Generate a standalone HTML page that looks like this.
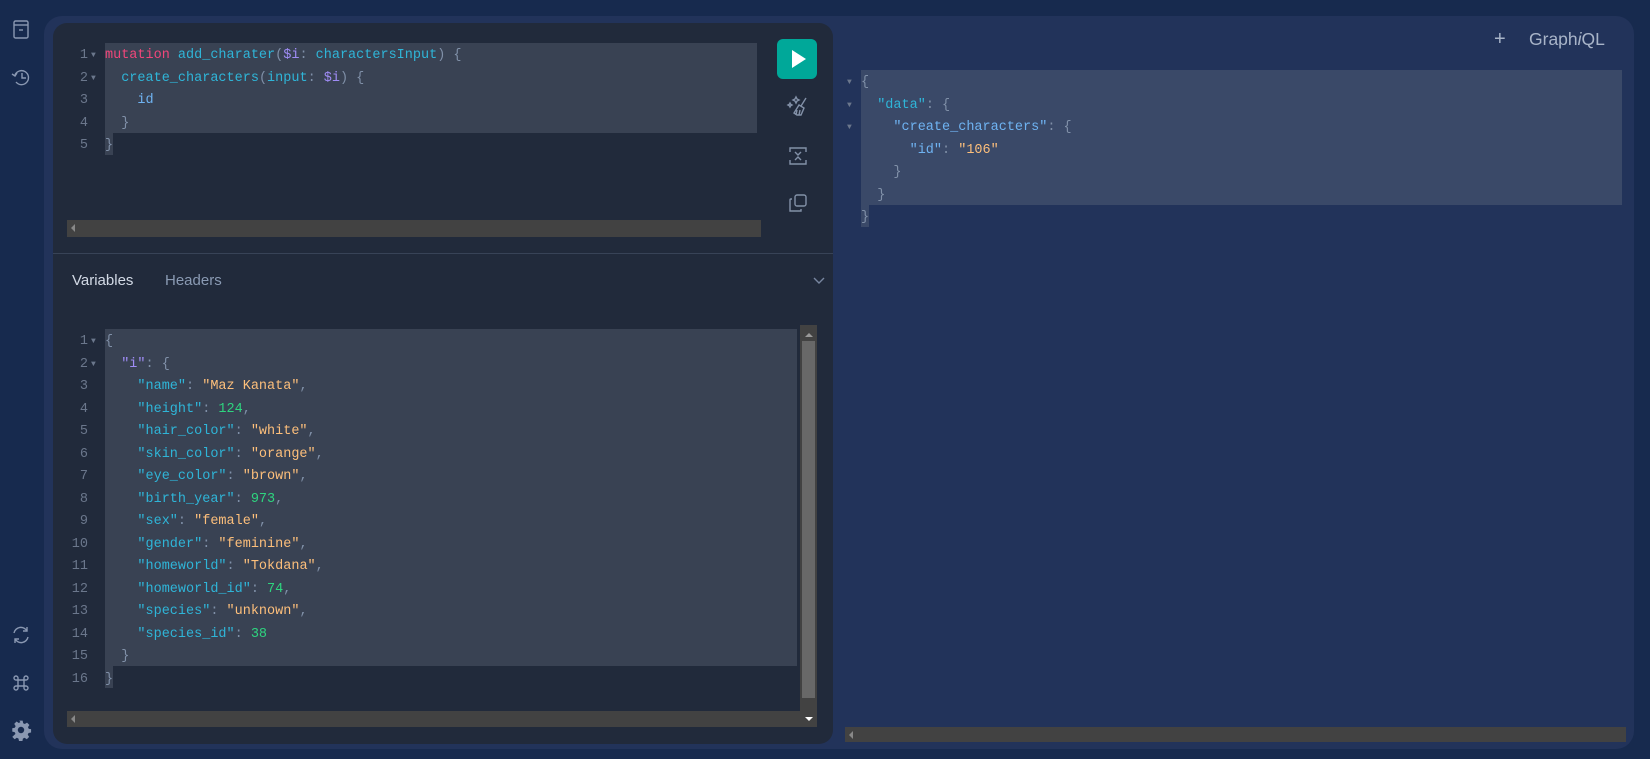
<!DOCTYPE html>
<html><head><meta charset="utf-8"><style>
*{margin:0;padding:0;box-sizing:border-box}
body{width:1650px;height:759px;background:#172a4e;position:relative;overflow:hidden;font-family:"Liberation Sans",sans-serif}
.abs{position:absolute}
.panel{left:44px;top:16px;width:1590px;height:733px;background:#22335a;border-radius:18px}
.card{left:53px;top:23px;width:780px;height:721px;background:#212a3b;border-radius:14px}
.code{font-family:"Liberation Mono",monospace;font-size:13.5px;line-height:22.5px;white-space:pre;color:#8090a8}
.num{width:40px;text-align:right;color:#6b778c}
.k{color:#f0467a}.d{color:#2fb5d8}.v{color:#9f8cf5}.p{color:#7d899e}.s{color:#fdbf7b}.n{color:#2ed47f}.f{color:#2fb5d8}.b{color:#6fb3f2}
.sel{background:#394253}
.rsel{background:#3a4968}
.sb{background:#424242}
.arrow{font-size:8px;color:#6b778c}
svg{position:absolute}
</style></head><body>
<div class="abs panel"></div>
<div class="abs card"></div>

<svg style="left:10px;top:18px" width="22" height="22" viewBox="0 0 22 22" fill="none" stroke="#8a98b2" stroke-width="1.4"><rect x="4" y="3" width="14" height="17" rx="1.5"/><line x1="4" y1="7" x2="18" y2="7"/><line x1="9" y1="12" x2="13" y2="12"/></svg>
<svg style="left:10px;top:66px" width="22" height="22" viewBox="0 0 22 22" fill="none" stroke="#8a98b2" stroke-width="1.4"><path d="M5 9a7 7 0 1 1 1 7"/><path d="M2 8l3 2 2-3"/><path d="M12 7v5h4"/></svg>
<svg style="left:10px;top:624px" width="22" height="22" viewBox="0 0 22 22" fill="none" stroke="#8a98b2" stroke-width="1.4"><path d="M4 9a7 7 0 0 1 13-2"/><path d="M17 3v4h-4"/><path d="M18 13a7 7 0 0 1-13 2"/><path d="M5 19v-4h4"/></svg>
<svg style="left:10px;top:672px" width="22" height="22" viewBox="0 0 22 22" fill="none" stroke="#8a98b2" stroke-width="1.4"><path d="M8 8h6v6H8zM8 8V6a2 2 0 1 0-2 2zM14 8V6a2 2 0 1 1 2 2zM8 14v2a2 2 0 1 1-2-2zM14 14v2a2 2 0 1 0 2-2z"/></svg>
<svg style="left:10px;top:719px" width="22" height="22" viewBox="0 0 24 24"><path fill="#8a98b2" d="M10 2h4l.6 3 2 1 2.6-1.7 2.8 2.8L20.3 9.7l1 2 2.7.3v4l-3 .6-1 2 1.7 2.6-2.8 2.8-2.6-1.7-2 1-.6 3h-4l-.6-3-2-1-2.6 1.7-2.8-2.8L5.5 17.6l-1-2L1.7 15v-4l3-.6 1-2L4 5.8 6.8 3l2.6 1.7 2-1z" transform="scale(.92) translate(1 0)"/><circle cx="12" cy="12" r="3.5" fill="#172a4e"/></svg>

<div class="abs sel" style="left:105px;top:43px;width:652px;height:90px"></div>
<div class="abs sel" style="left:105px;top:133px;width:8px;height:22px"></div>
<div class="abs code num" style="left:48px;top:45px">1
2
3
4
5</div>
<div class="abs code arrow" style="left:91px;top:45px;font-size:8px;line-height:22.5px">▼
▼</div>
<div class="abs code" style="left:105px;top:45px"><span class="k">mutation</span> <span class="d">add_charater</span>(<span class="v">$i</span>: <span class="d">charactersInput</span>) {
  <span class="d">create_characters</span>(<span class="d">input</span>: <span class="v">$i</span>) {
    <span class="b">id</span>
  }
}</div>
<div class="abs sb" style="left:67px;top:220px;width:694px;height:17px"></div>
<div class="abs" style="left:71px;top:224px;width:0;height:0;border-top:4px solid transparent;border-bottom:4px solid transparent;border-right:4px solid #888"></div>

<div class="abs" style="left:777px;top:39px;width:40px;height:40px;background:#00a899;border-radius:6px"></div>
<div class="abs" style="left:792px;top:50px;width:0;height:0;border-top:9px solid transparent;border-bottom:9px solid transparent;border-left:14px solid #fff"></div>
<svg style="left:785px;top:93px" width="26" height="26" viewBox="0 0 26 26" fill="none" stroke="#8391a8" stroke-width="1.4"><path d="M11 4l1 2 2 1-2 1-1 2-1-2-2-1 2-1z"/><path d="M5 10l.7 1.3L7 12l-1.3.7L5 14l-.7-1.3L3 12l1.3-.7z"/><path d="M21 5l-5 8"/><path d="M14 12l5 3-3 7h-4l-3-2z"/><path d="M12 17l-1 5M15 17l-1 5"/></svg>
<svg style="left:785px;top:143px" width="26" height="26" viewBox="0 0 26 26" fill="none" stroke="#8391a8" stroke-width="1.4"><path d="M5 9V5h16v4M5 17v4h16v-4"/><path d="M10 9l3 3 3-3M10 17l3-3 3 3"/></svg>
<svg style="left:785px;top:190px" width="26" height="26" viewBox="0 0 26 26" fill="none" stroke="#8391a8" stroke-width="1.4"><rect x="10" y="5" width="11" height="11" rx="2"/><path d="M7 9H6a1 1 0 0 0-1 1v11h11v-2"/></svg>

<div class="abs" style="left:53px;top:253px;width:780px;height:1px;background:#384357"></div>
<div class="abs" style="left:72px;top:272px;font-size:15px;color:#d3dae6">Variables</div>
<div class="abs" style="left:165px;top:272px;font-size:15px;color:#8a9ab3">Headers</div>
<svg style="left:812px;top:276px" width="14" height="10" viewBox="0 0 14 10" fill="none" stroke="#7886a0" stroke-width="1.4"><path d="M2 2l5 5 5-5"/></svg>

<div class="abs sel" style="left:105px;top:329px;width:692px;height:337px"></div>
<div class="abs sel" style="left:105px;top:666px;width:8px;height:22px"></div>
<div class="abs code num" style="left:48px;top:331px">1
2
3
4
5
6
7
8
9
10
11
12
13
14
15
16</div>
<div class="abs code arrow" style="left:91px;top:331px;line-height:22.5px">▼
▼</div>
<div class="abs code" style="left:105px;top:331px">{
  <span class="v">"i"</span>: {
    <span class="f">"name"</span>: <span class="s">"Maz Kanata"</span>,
    <span class="f">"height"</span>: <span class="n">124</span>,
    <span class="f">"hair_color"</span>: <span class="s">"white"</span>,
    <span class="f">"skin_color"</span>: <span class="s">"orange"</span>,
    <span class="f">"eye_color"</span>: <span class="s">"brown"</span>,
    <span class="f">"birth_year"</span>: <span class="n">973</span>,
    <span class="f">"sex"</span>: <span class="s">"female"</span>,
    <span class="f">"gender"</span>: <span class="s">"feminine"</span>,
    <span class="f">"homeworld"</span>: <span class="s">"Tokdana"</span>,
    <span class="f">"homeworld_id"</span>: <span class="n">74</span>,
    <span class="f">"species"</span>: <span class="s">"unknown"</span>,
    <span class="f">"species_id"</span>: <span class="n">38</span>
  }
}</div>
<div class="abs sb" style="left:800px;top:325px;width:17px;height:386px"></div>
<div class="abs" style="left:802px;top:341px;width:13px;height:357px;background:#686868"></div>
<div class="abs" style="left:805px;top:333px;width:0;height:0;border-left:4px solid transparent;border-right:4px solid transparent;border-bottom:4px solid #999"></div>
<div class="abs sb" style="left:67px;top:711px;width:750px;height:16px"></div>
<div class="abs" style="left:71px;top:715px;width:0;height:0;border-top:4px solid transparent;border-bottom:4px solid transparent;border-right:4px solid #888"></div>
<div class="abs" style="left:805px;top:717px;width:0;height:0;border-left:4px solid transparent;border-right:4px solid transparent;border-top:4px solid #fff"></div>

<div class="abs" style="left:1494px;top:28px;font-size:20px;color:#a8b4c8">+</div>
<div class="abs" style="left:1529px;top:29px;font-size:17.5px;color:#a8b4c8">Graph<i>i</i>QL</div>
<div class="abs rsel" style="left:861px;top:70px;width:761px;height:135px"></div>
<div class="abs rsel" style="left:861px;top:205px;width:8px;height:22px"></div>
<div class="abs code arrow" style="left:847px;top:72px;line-height:22.5px">▼
▼
▼</div>
<div class="abs code" style="left:861px;top:72px">{
  <span class="f">"data"</span>: {
    <span class="b">"create_characters"</span>: {
      <span class="b">"id"</span>: <span class="s">"106"</span>
    }
  }
}</div>
<div class="abs sb" style="left:845px;top:727px;width:781px;height:15px"></div>
<div class="abs" style="left:849px;top:731px;width:0;height:0;border-top:4px solid transparent;border-bottom:4px solid transparent;border-right:4px solid #888"></div>
</body></html>
